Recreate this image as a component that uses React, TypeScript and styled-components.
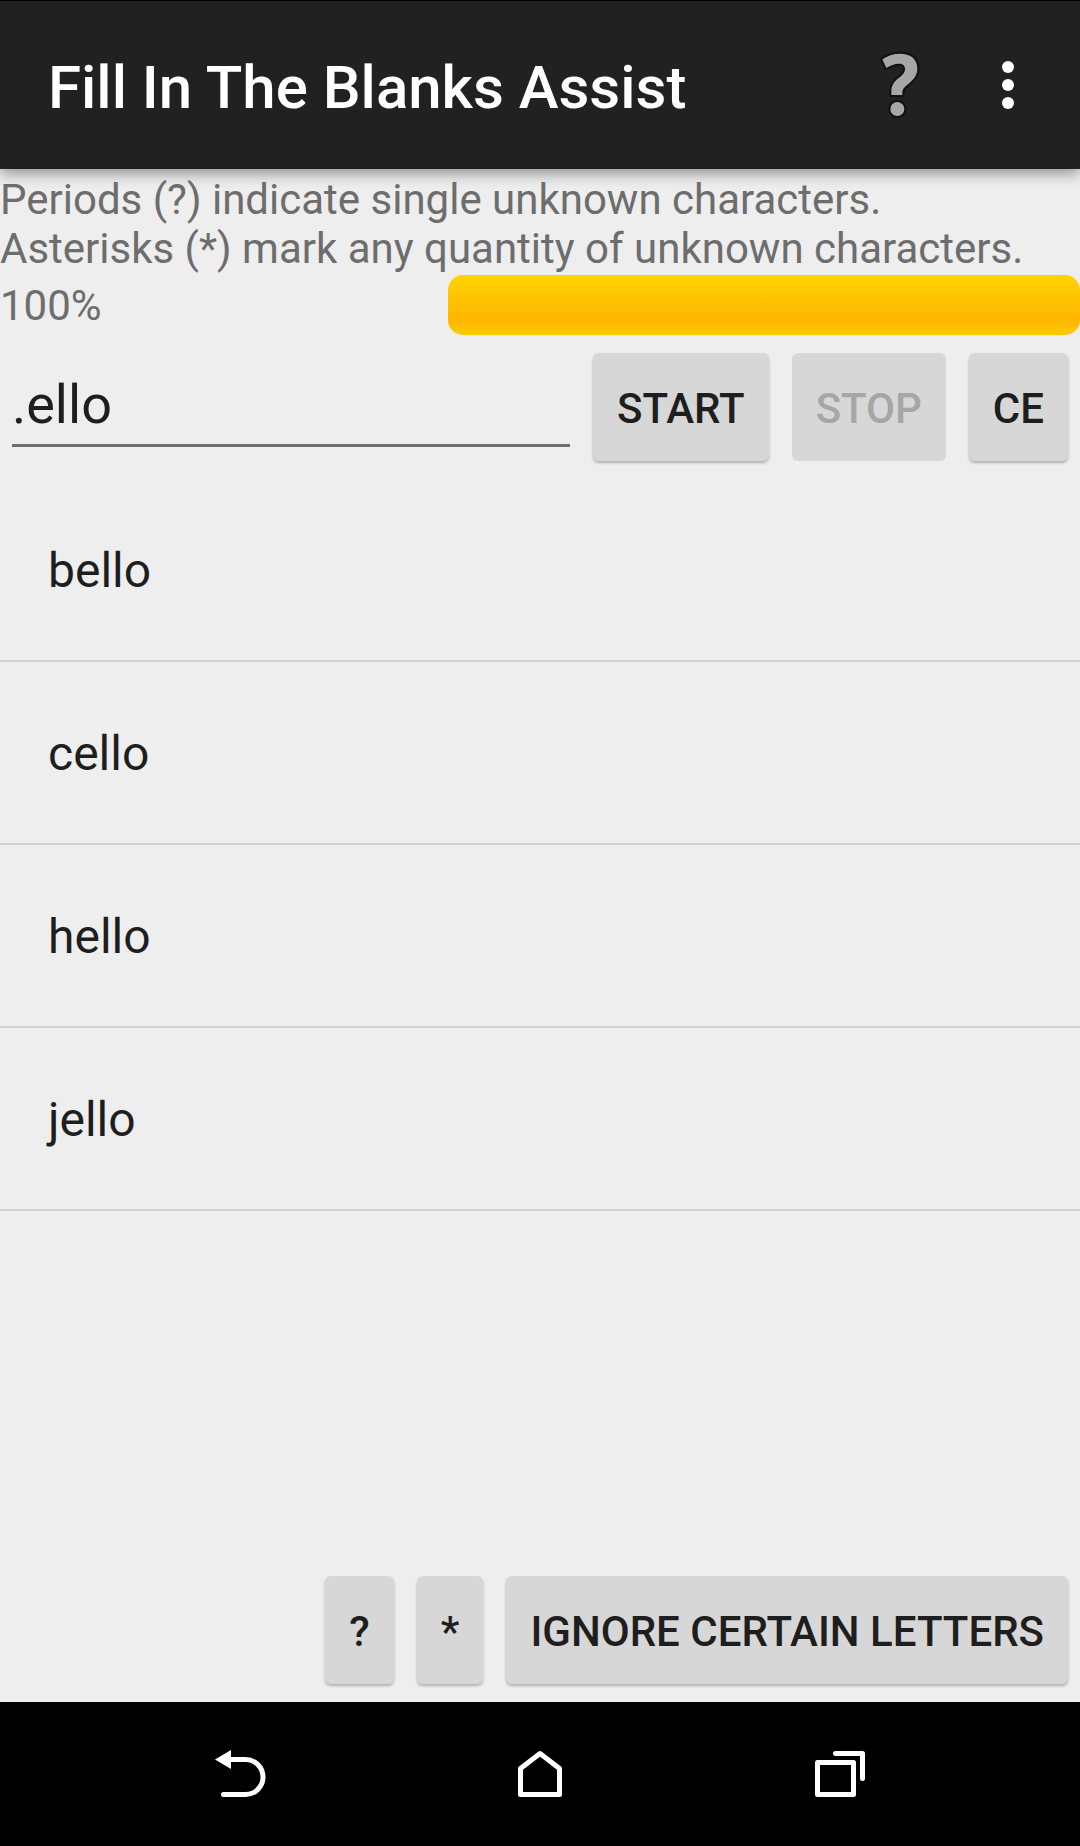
import React, { useState } from "react";
import styled, { createGlobalStyle } from "styled-components";

const GlobalStyle = createGlobalStyle`
  *, *::before, *::after { box-sizing: border-box; }
  body { margin: 0; background: #eeeeee; }
  button, input { font-family: inherit; margin: 0; }
`;

const Screen = styled.div`
  display: flex;
  flex-direction: column;
  min-height: 100vh;
  background: #eeeeee;
  color: #1e1e1e;
  font-family: Roboto, "Noto Sans", sans-serif;
`;

const AppBar = styled.header`
  display: flex;
  align-items: center;
  height: 169px;
  padding: 0 48px;
  border-top: 1px solid #000000;
  background: #212121;
  box-shadow: 0 4px 14px rgba(0, 0, 0, 0.42);
`;

const Title = styled.h1`
  flex: 1;
  margin: 0;
  padding-top: 6px;
  color: #ffffff;
  font-size: 60px;
  font-weight: 500;
  line-height: 72px;
`;

const IconButton = styled.button<{ $width: number }>`
  display: flex;
  align-items: center;
  justify-content: center;
  width: ${(p) => p.$width}px;
  height: 144px;
  padding: 0;
  border: 0;
  background: none;
`;

const Hint = styled.p`
  margin: 0;
  padding-top: 6px;
  color: #6d6d6d;
  font-size: 42px;
  line-height: 49px;
`;

const ProgressRow = styled.div`
  display: flex;
  align-items: center;
  justify-content: space-between;
  margin-top: 2px;
  color: #6d6d6d;
  font-size: 42px;
`;

const ProgressLabel = styled.label`
  padding-top: 2px;
  line-height: 56px;
`;

const Progress = styled.progress`
  appearance: none;
  display: block;
  width: 632px;
  max-width: 60%;
  height: 60px;
  border: 0;
  border-radius: 15px;
  background: #9d9e9d;
  overflow: hidden;

  &::-webkit-progress-bar {
    background: #9d9e9d;
  }
  &::-webkit-progress-value {
    background: linear-gradient(#ffd300, #ffb600 75%, #ffcb00);
  }
`;

const SearchRow = styled.form`
  display: flex;
  gap: 23px;
  padding: 18px 12px;
`;

const PatternInput = styled.input`
  flex: 1;
  min-width: 0;
  height: 94px;
  padding: 12px 0 0;
  border: 0;
  border-bottom: 3px solid #6d6d6d;
  border-radius: 0;
  outline: 0;
  background: none;
  color: #1e1e1e;
  font-size: 54px;
`;

const RaisedButton = styled.button`
  height: 108px;
  padding: 4px 24px 0;
  border: 0;
  border-radius: 6px;
  background: #d7d7d7;
  box-shadow: 0 2px 3px rgba(0, 0, 0, 0.26);
  color: #1e1e1e;
  font-size: 42px;
  font-weight: 500;
  line-height: 48px;
  white-space: nowrap;

  &:disabled {
    box-shadow: none;
    color: #a6a6a6;
  }
`;

const Results = styled.ul`
  flex: 1;
  margin: 0;
  padding: 0;
  list-style: none;
`;

const Result = styled.li`
  display: flex;
  align-items: center;
  height: 183px;
  padding: 2px 48px 0;
  border-bottom: 2px solid #cfcfcf;
  font-size: 48px;
  line-height: 56px;
`;

const BottomActions = styled.div`
  display: flex;
  justify-content: flex-end;
  gap: 23px;
  padding: 12px 12px 18px;
`;

const SystemNav = styled.nav`
  display: flex;
  justify-content: space-around;
  padding: 0 90px;
  background: #000000;
`;

const NavIcon = styled.svg`
  display: block;
  width: 60px;
  height: 60px;
  fill: none;
  stroke: #ffffff;
  stroke-width: 5;
  stroke-linecap: round;
  stroke-linejoin: round;
`;

const HelpIcon = () => (
  <svg width="48" height="72" viewBox="50 27 144 216" aria-hidden="true">
    <g fill="#a6a6a6" stroke="#111111" strokeWidth="13" strokeLinejoin="round" paintOrder="stroke">
      <path d="M69 58 C86 47 101 41 121 41 C155 41 174 57 174 85 C174 105 165 117 147 132 C133 143 129 148 129 158 V165 H96 V154 C96 138 102 128 117 115 C132 103 137 97 137 87 C137 76 130 71 118 71 C106 71 94 76 81 84 Z" />
      <circle cx="114" cy="207" r="21" />
    </g>
  </svg>
);

const OverflowIcon = () => (
  <svg width="12" height="48" viewBox="0 0 12 48" fill="#ffffff" aria-hidden="true">
    <circle cx="6" cy="6" r="6" />
    <circle cx="6" cy="24" r="6" />
    <circle cx="6" cy="42" r="6" />
  </svg>
);

const words = ["bello", "cello", "hello", "jello"];

export default function App() {
  const [pattern, setPattern] = useState(".ello");

  return (
    <Screen>
      <GlobalStyle />
      <AppBar>
        <Title>Fill In The Blanks Assist</Title>
        <IconButton type="button" aria-label="Help" $width={168}>
          <HelpIcon />
        </IconButton>
        <IconButton type="button" aria-label="More options" $width={48}>
          <OverflowIcon />
        </IconButton>
      </AppBar>

      <Hint>
        Periods (?) indicate single unknown characters.
        <br />
        Asterisks (*) mark any quantity of unknown characters.
      </Hint>
      <ProgressRow>
        <ProgressLabel htmlFor="progress">100%</ProgressLabel>
        <Progress id="progress" value={100} max={100} />
      </ProgressRow>

      <SearchRow onSubmit={(e) => e.preventDefault()}>
        <PatternInput
          aria-label="Pattern"
          type="text"
          spellCheck={false}
          value={pattern}
          onChange={(e) => setPattern(e.target.value)}
        />
        <RaisedButton type="submit">START</RaisedButton>
        <RaisedButton type="button" disabled>
          STOP
        </RaisedButton>
        <RaisedButton type="button" onClick={() => setPattern("")}>
          CE
        </RaisedButton>
      </SearchRow>

      <Results>
        {words.map((word) => (
          <Result key={word}>{word}</Result>
        ))}
      </Results>

      <BottomActions>
        <RaisedButton type="button" onClick={() => setPattern(pattern + "?")}>
          ?
        </RaisedButton>
        <RaisedButton type="button" onClick={() => setPattern(pattern + "*")}>
          *
        </RaisedButton>
        <RaisedButton type="button">IGNORE CERTAIN LETTERS</RaisedButton>
      </BottomActions>

      <SystemNav>
        <IconButton type="button" aria-label="Back" $width={144}>
          <NavIcon viewBox="0 0 60 60">
            <path d="M20 15.5 H35.5 A17.5 17.5 0 0 1 35.5 50.5 H13.5" />
            <path d="M5 15.5 L21 6 V25 Z" fill="#ffffff" stroke="none" />
          </NavIcon>
        </IconButton>
        <IconButton type="button" aria-label="Home" $width={144}>
          <NavIcon viewBox="0 0 60 60">
            <path d="M10.5 24.5 L30 9.5 L49.5 24.5 V50.5 H10.5 Z" />
          </NavIcon>
        </IconButton>
        <IconButton type="button" aria-label="Recent apps" $width={144}>
          <NavIcon viewBox="0 0 60 60">
            <path d="M7.5 18.5 H43.5 V50.5 H7.5 Z" />
            <path d="M25.5 9.5 H52.5 V34.5" />
          </NavIcon>
        </IconButton>
      </SystemNav>
    </Screen>
  );
}
